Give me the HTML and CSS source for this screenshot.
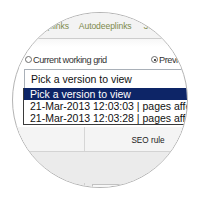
FILE: index.html
```html
<!DOCTYPE html>
<html>
<head>
<meta charset="utf-8">
<link rel="stylesheet" href="styles.css">
</head>
<body>
<div class="lens">
  <div class="page">
    <div class="tabs">
      <span class="tab">Deeplinks</span>
      <span class="tab">Autodeeplinks</span>
      <span class="tab">301 redirects</span>
    </div>
    <div class="radios">
      <label class="opt first"><span class="radio"></span>Current working grid</label>
      <label class="opt"><span class="radio on"></span>Previous version</label>
    </div>
    <div class="picker">
      <div class="select">Pick a version to view</div>
      <ul class="list">
        <li class="sel">Pick a version to view</li>
        <li>21-Mar-2013 12:03:03 | pages affected</li>
        <li>21-Mar-2013 12:03:28 | pages affected</li>
      </ul>
    </div>
    <div class="grid">
      <div class="ghead">
        <div class="c1"></div>
        <div class="c2">SEO rule</div>
      </div>
      <div class="gbody"></div>
      <div class="grow">
        <div class="c1"></div>
        <div class="c2"><div class="input"></div></div>
      </div>
    </div>
  </div>
</div>
</body>
</html>
```

FILE: styles.css
```css
html, body {
  margin: 0;
  padding: 0;
  background: #ffffff;
}
.lens {
  box-sizing: border-box;
  width: 176px;
  height: 176px;
  margin: 12px;
  border: 1px solid #b4b4b4;
  border-radius: 50%;
  overflow: hidden;
  background: #ffffff;
}
.page {
  margin: -13px 0 0 -13px;
  width: 240px;
  font-family: "Liberation Sans", Arial, sans-serif;
}
.tabs {
  box-sizing: border-box;
  height: 39px;
  padding: 21px 0 0 32px;
  display: flex;
  gap: 10px;
  background: #f3f3f3;
  border-bottom: 1px solid #cdcdcd;
  font-size: 8.6px;
  line-height: 10px;
  color: #7d8a4c;
  letter-spacing: -0.1px;
  white-space: nowrap;
}
.tabs .tab:last-child { margin-left: 2px; }
.radios {
  box-sizing: border-box;
  height: 30px;
  padding: 11px 0 0 25px;
  display: flex;
  background: linear-gradient(#f7f7f7, #ffffff 8px);
  font-size: 9.2px;
  line-height: 10px;
  color: #333333;
  letter-spacing: -0.45px;
  white-space: nowrap;
}
.opt {
  display: flex;
  align-items: center;
}
.opt.first { width: 126px; }
.radio {
  box-sizing: border-box;
  width: 7px;
  height: 7px;
  margin-right: 1px;
  border: 1px solid #6d6d6d;
  border-radius: 50%;
  background: #fff;
  position: relative;
}
.radio.on::after {
  content: "";
  position: absolute;
  left: 1.5px;
  top: 1.5px;
  width: 2px;
  height: 2px;
  border-radius: 50%;
  background: #111;
}
.picker {
  padding-left: 23px;
  font-size: 10.5px;
  line-height: 12px;
  white-space: nowrap;
}
.select {
  box-sizing: border-box;
  height: 19px;
  margin-left: 1px;
  padding: 3px 0 0 6px;
  border: 1px solid #a9b0b8;
  border-bottom: none;
  color: #111;
}
.list {
  margin: 0;
  padding: 0;
  list-style: none;
  border: 1px solid #3a3a3a;
  border-top: none;
  color: #111;
  height: 36px;
}
.list li {
  height: 12px;
  padding-left: 6px;
}
.list li.sel {
  background: #0d2567;
  color: #ffffff;
}
.grid {
  margin-top: 2px;
  background: #ebebeb;
}
.ghead {
  display: flex;
  height: 24px;
  background: #f4f4f4;
  border-bottom: 1px solid #d3d3d3;
  font-size: 8.2px;
  color: #222;
}
.c1 {
  width: 84px;
  border-right: 1px solid #d6d6d6;
}
.ghead .c2 {
  width: 126px;
  text-align: center;
  line-height: 10px;
  padding-top: 9px;
}
.gbody {
  height: 31px;
}
.grow {
  display: flex;
  height: 20px;
}
.grow .c1 { border-right-color: #cfcfcf; }
.grow .c2 {
  padding-left: 7px;
}
.input {
  width: 110px;
  height: 14px;
  margin-top: 1px;
  border: 1px solid #c2c2c2;
  background: #f8f8f8;
}
```
